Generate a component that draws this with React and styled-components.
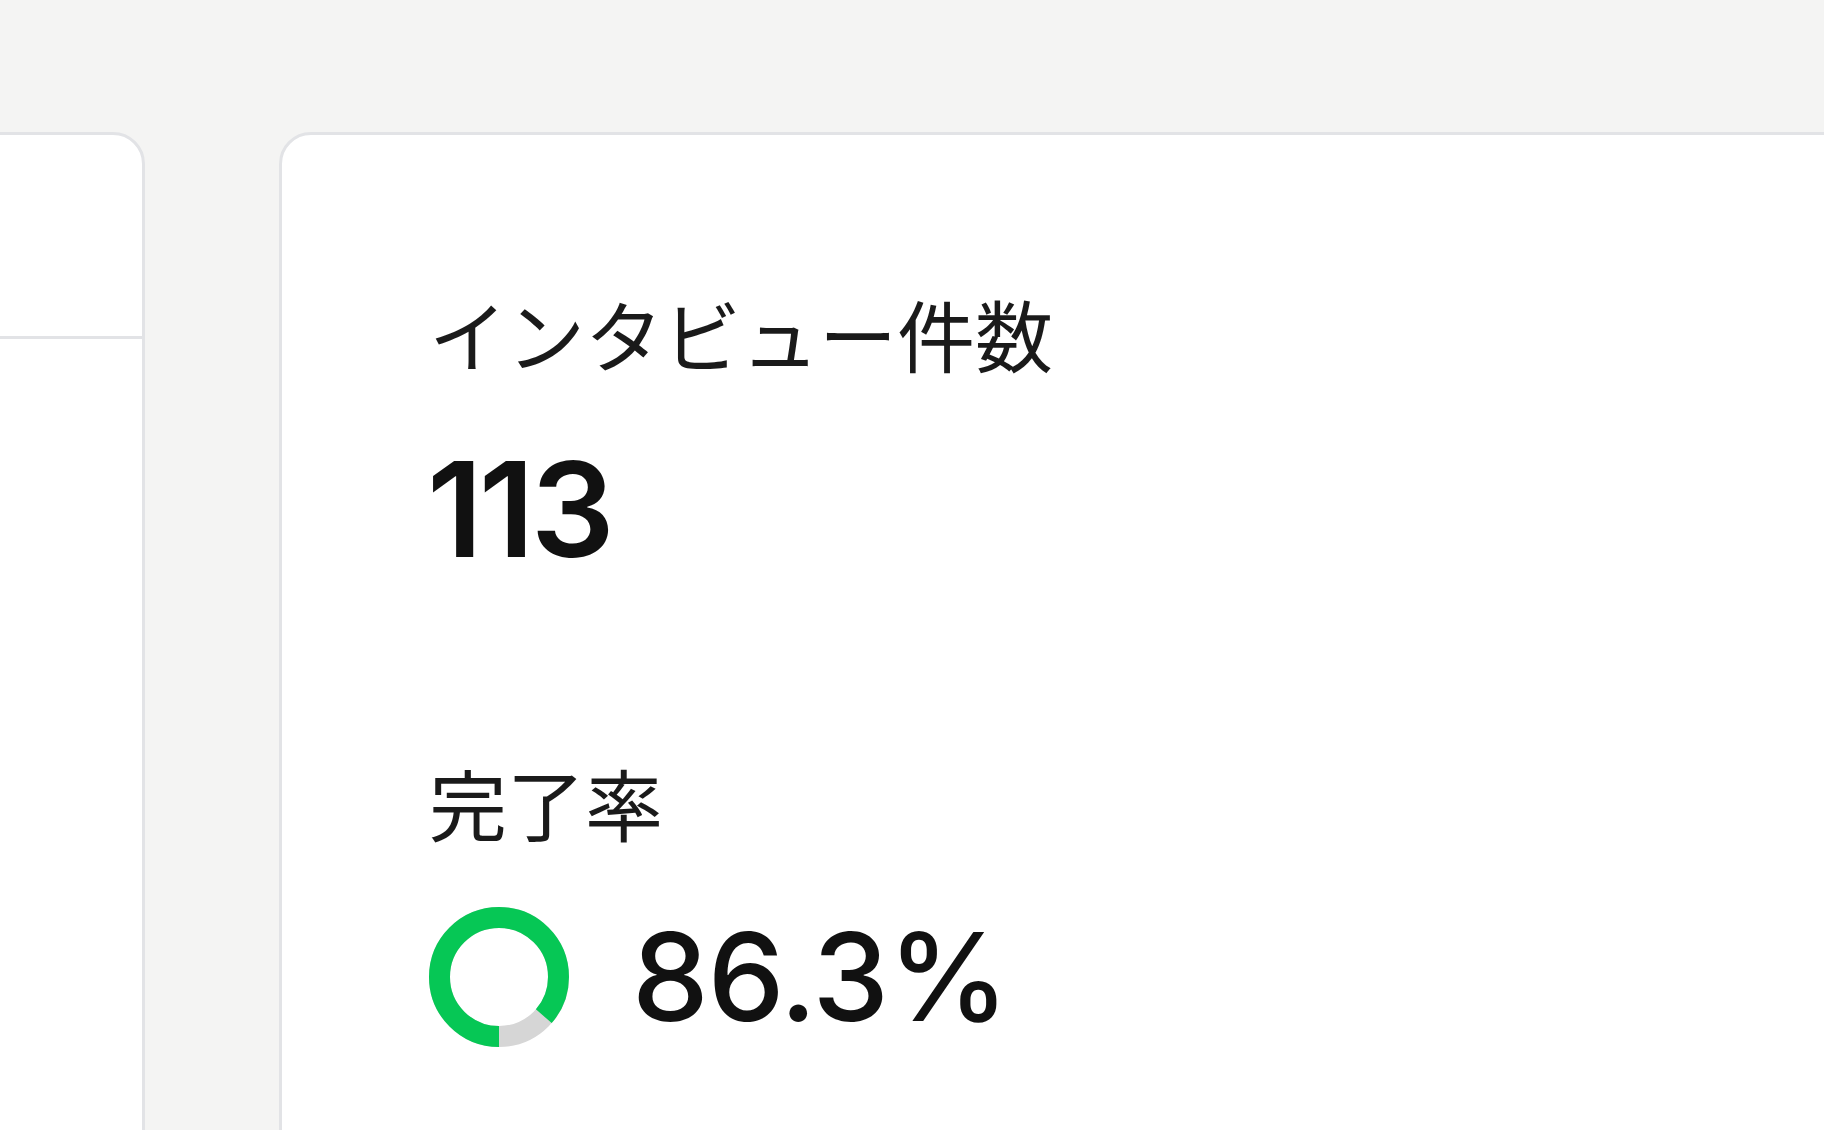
import React from 'react'
import styled, { createGlobalStyle } from 'styled-components'

const GlobalStyle = createGlobalStyle`
  html, body {
    margin: 0;
    padding: 0;
    background: #f4f4f3;
  }
  body {
    font-family: Inter, "Noto Sans CJK JP", sans-serif;
    color: #111;
  }
`

const Page = styled.div`
  width: 1824px;
  height: 1130px;
  overflow: hidden;
  box-sizing: border-box;
  padding-top: 132px;
`

const Columns = styled.div`
  display: grid;
  grid-template-columns: 545px 1900px;
  column-gap: 134px;
  margin-left: -400px;
  height: 1200px;
`

const Card = styled.section`
  background: #fff;
  border: 3px solid #e2e3e6;
  border-radius: 32px;
  box-sizing: border-box;
`

const SideHeader = styled.div`
  height: 201px;
  border-bottom: 3px solid #e2e3e6;
`

const StatsCard = styled(Card)`
  padding: 159px 0 0 147px;
`

const Stat = styled.div`
  display: flex;
  flex-direction: column;
  margin-bottom: ${({ gap }) => gap}px;
`

const Label = styled.div`
  font-family: "Noto Sans CJK JP", sans-serif;
  font-size: 78px;
  line-height: 1;
  font-weight: 400;
  color: #1a1a1a;
  margin-bottom: ${({ gap }) => gap}px;
`

const BigNumber = styled.div`
  font-size: 132px;
  line-height: 1;
  font-weight: 600;
  letter-spacing: -4px;
  margin-left: -2px;
`

const RateRow = styled.div`
  display: flex;
  align-items: center;
  gap: 63px;
`

const Percent = styled.div`
  font-size: 122px;
  line-height: 1;
  font-weight: 500;
  letter-spacing: -1px;
`

function Donut({ value }) {
  const r = 59.5
  const c = 2 * Math.PI * r
  const done = c * value / 100
  return (
    <svg width="140" height="140" viewBox="0 0 140 140">
      <g transform="rotate(90 70 70)">
        <circle cx="70" cy="70" r={r} fill="none" stroke="#d6d6d6" strokeWidth="21" />
        <circle
          cx="70"
          cy="70"
          r={r}
          fill="none"
          stroke="#06c755"
          strokeWidth="21"
          strokeDasharray={`${done} ${c}`}
        />
      </g>
    </svg>
  )
}

export default function App() {
  return (
    <Page>
      <GlobalStyle />
      <Columns>
        <Card>
          <SideHeader />
        </Card>
        <StatsCard>
          <Stat gap={188}>
            <Label gap={71}>インタビュー件数</Label>
            <BigNumber>113</BigNumber>
          </Stat>
          <Stat gap={0}>
            <Label gap={66}>完了率</Label>
            <RateRow>
              <Donut value={86.3} />
              <Percent>86.3%</Percent>
            </RateRow>
          </Stat>
        </StatsCard>
      </Columns>
    </Page>
  )
}
